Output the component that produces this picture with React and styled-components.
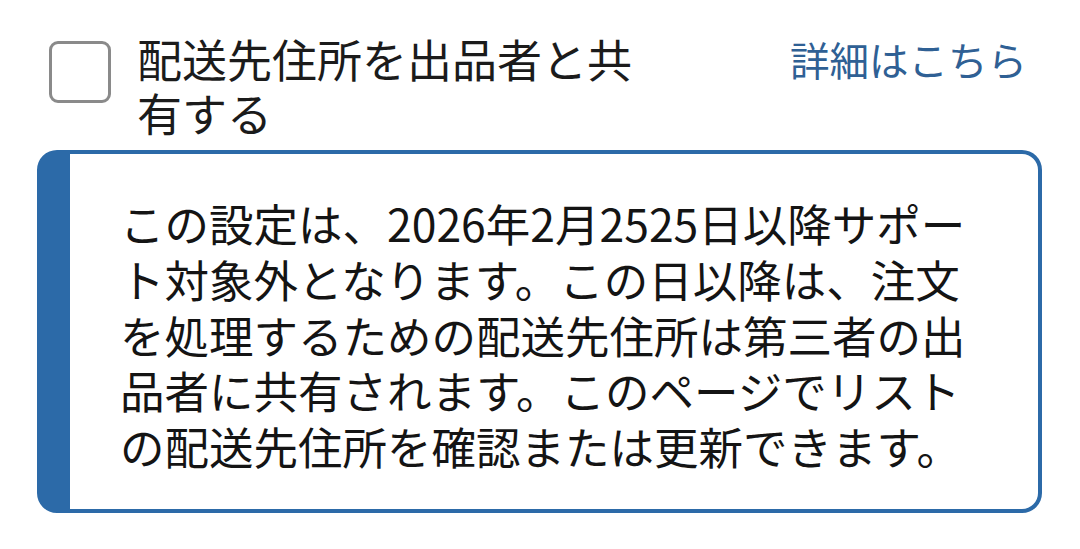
import React from 'react';
import styled, { createGlobalStyle } from 'styled-components';

const GlobalStyle = createGlobalStyle`
  html, body {
    margin: 0;
    padding: 0;
    background: #ffffff;
  }
  body {
    font-family: "Noto Sans CJK JP", "Noto Sans", sans-serif;
    color: #161616;
  }
`;

const Page = styled.div`
  width: 1080px;
  height: 549px;
  box-sizing: border-box;
  padding: 32px 38px 0 37px;
  overflow: hidden;
`;

const Header = styled.div`
  display: flex;
  align-items: flex-start;
`;

const Checkbox = styled.span`
  flex: none;
  width: 56px;
  height: 56px;
  margin: 9px 0 0 12px;
  border: 3px solid #8a8a8a;
  border-radius: 9px;
  background: #fff;
`;

const Label = styled.div`
  width: 500px;
  margin-left: 26px;
  font-size: 45px;
  line-height: 54px;
  color: #1b1b1b;
`;

const MoreLink = styled.a`
  margin-left: auto;
  margin-right: 15px;
  font-size: 39.5px;
  line-height: 54px;
  color: #2f6094;
  text-decoration: none;
`;

const Notice = styled.div`
  margin-top: 10px;
  height: 363px;
  box-sizing: border-box;
  border: 4px solid #2c6aa8;
  border-left-width: 33px;
  border-radius: 20px;
  padding: 41px 20px 0 50px;
`;

const NoticeText = styled.p`
  margin: 0;
  font-size: 44.5px;
  line-height: 55.75px;
  color: #141414;
  white-space: nowrap;
`;

const lines = [
  'この設定は、2026年2月2525日以降サポー',
  'ト対象外となります。この日以降は、注文',
  'を処理するための配送先住所は第三者の出',
  '品者に共有されます。このページでリスト',
  'の配送先住所を確認または更新できます。',
];

const App = () => (
  <>
    <GlobalStyle />
    <Page>
      <Header>
        <Checkbox role="checkbox" aria-checked="false" />
        <Label>配送先住所を出品者と共有する</Label>
        <MoreLink href="#">詳細はこちら</MoreLink>
      </Header>
      <Notice>
        <NoticeText>
          {lines.map((line, i) => (
            <React.Fragment key={i}>
              {line}
              {i < lines.length - 1 && <br />}
            </React.Fragment>
          ))}
        </NoticeText>
      </Notice>
    </Page>
  </>
);

export default App;
